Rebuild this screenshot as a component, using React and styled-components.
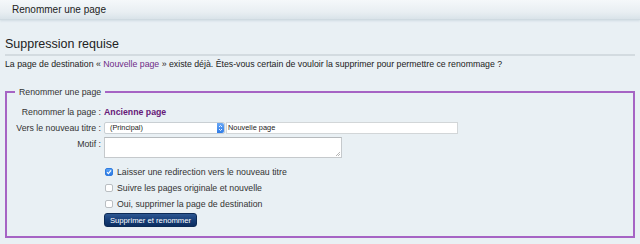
import styled, { createGlobalStyle } from "styled-components";

const GlobalStyle = createGlobalStyle`
    html, body {
        margin: 0;
        padding: 0;
        background: #e9f0f4;
        font-family: "Liberation Sans", Arial, sans-serif;
        color: #222;
    }
`;

const Page = styled.div`
    width: 640px;
    height: 244px;
    overflow: hidden;
`;

const TopBar = styled.div`
    height: 19px;
    padding-left: 12px;
    display: flex;
    align-items: center;
    font-size: 10px;
    color: #222;
    background: linear-gradient(to bottom, #f5f8fa 0%, #e8eef2 65%, #d9e3e9 100%);
    border-bottom: 1px solid #cfdae1;
    box-shadow: 0 1px 2px rgba(160, 180, 195, 0.35);
`;

const Body = styled.div`
    padding: 16px 5px 0 5px;
`;

const Heading = styled.h1`
    margin: 0;
    font-size: 12.5px;
    font-weight: normal;
    line-height: 16px;
    padding-bottom: 2px;
    border-bottom: 2px solid #d3dbe0;
`;

const Intro = styled.p`
    margin: 2px 0 0 0;
    font-size: 8.75px;
    line-height: 12px;
`;

const PageLink = styled.span`
    color: ${props => (props.strong ? "#661a78" : "#6e2a86")};
    font-weight: ${props => (props.strong ? "bold" : "normal")};
`;

const Fieldset = styled.fieldset`
    margin: 16px 0 0 0;
    padding: 7px 0 9px 0;
    border: 2px solid #a664c4;
    min-width: 0;
`;

const Legend = styled.legend`
    font-size: 8.75px;
    line-height: 12px;
    padding: 0 4px;
    margin-left: 8px;
    color: #333;
`;

const FormGrid = styled.div`
    display: grid;
    grid-template-columns: 94px 1fr;
    column-gap: 3px;
    row-gap: 3px;
    font-size: 8.75px;
    align-items: center;
`;

const Label = styled.div`
    text-align: right;
    color: #333;
    line-height: 12px;
    align-self: ${props => (props.top ? "start" : "center")};
    padding-top: ${props => (props.top ? "1px" : "0")};
`;

const Field = styled.div`
    display: flex;
    align-items: center;
    min-height: 13px;
`;

const SelectBox = styled.div`
    width: 114px;
    height: 10px;
    display: flex;
    align-items: center;
    justify-content: space-between;
    background: #fff;
    border: 1px solid #c9cfd3;
    border-radius: 2px;
    font-size: 7.3px;
    padding-left: 5px;
    color: #222;
`;

const SelectArrow = styled.div`
    width: 7px;
    height: 10px;
    border-radius: 0 2px 2px 0;
    background: linear-gradient(to bottom, #6aa8f5, #2f7ce8);
    display: flex;
    align-items: center;
    justify-content: center;
`;

const TextInput = styled.div`
    width: 229px;
    height: 10px;
    margin-left: 1px;
    background: #fff;
    border: 1px solid #d2d6d8;
    font-size: 7.4px;
    line-height: 10px;
    padding-left: 1px;
    color: #222;
`;

const TextArea = styled.div`
    position: relative;
    width: 236px;
    height: 19px;
    background: #fff;
    border: 1px solid #c5c9cc;
    border-top-color: #b6babd;
`;

const Grip = styled.svg`
    position: absolute;
    right: 1px;
    bottom: 1px;
`;

const Options = styled.div`
    padding-left: 98px;
    margin-top: 8px;
    display: flex;
    flex-direction: column;
    gap: 4px;
`;

const Option = styled.label`
    display: flex;
    align-items: center;
    height: 12px;
    font-size: 8.75px;
    color: #333;
`;

const Box = styled.span`
    width: 6px;
    height: 6px;
    margin-right: 4px;
    border-radius: 2px;
    display: flex;
    align-items: center;
    justify-content: center;
    border: 1px solid ${props => (props.checked ? "#2f7be0" : "#b9bec2")};
    background: ${props => (props.checked ? "linear-gradient(#5aa2f4, #2b78e4)" : "#fff")};
`;

const SubmitButton = styled.button`
    margin-top: 3px;
    margin-left: 97px;
    width: 93px;
    height: 14px;
    padding: 0;
    font-family: "Liberation Sans", Arial, sans-serif;
    font-size: 7.7px;
    color: #fff;
    border: 1px solid #0c2a55;
    border-radius: 3px;
    background: linear-gradient(to bottom, #2d5791 0%, #163e78 50%, #0b2d60 100%);
    display: block;
`;

const Check = () => (
    <svg width="6" height="6" viewBox="0 0 6 6">
        <path d="M1 3.2 L2.4 4.6 L5 1.4" stroke="#fff" strokeWidth="1.2" fill="none" />
    </svg>
);

const options = [
    { text: "Laisser une redirection vers le nouveau titre", checked: true },
    { text: "Suivre les pages originale et nouvelle", checked: false },
    { text: "Oui, supprimer la page de destination", checked: false }
];

const App = () => (
    <>
        <GlobalStyle />
        <Page>
            <TopBar>Renommer une page</TopBar>
            <Body>
                <Heading>Suppression requise</Heading>
                <Intro>
                    La page de destination « <PageLink>Nouvelle page</PageLink> » existe déjà. Êtes-vous certain de vouloir la supprimer pour permettre ce renommage ?
                </Intro>
                <Fieldset>
                    <Legend>Renommer une page</Legend>
                    <FormGrid>
                        <Label>Renommer la page :</Label>
                        <Field><PageLink strong>Ancienne page</PageLink></Field>
                        <Label>Vers le nouveau titre :</Label>
                        <Field>
                            <SelectBox>
                                (Principal)
                                <SelectArrow>
                                    <svg width="5" height="8" viewBox="0 0 5 8">
                                        <path d="M1 3 L2.5 1.5 L4 3 M1 5 L2.5 6.5 L4 5" stroke="#fff" strokeWidth="0.9" fill="none" />
                                    </svg>
                                </SelectArrow>
                            </SelectBox>
                            <TextInput>Nouvelle page</TextInput>
                        </Field>
                        <Label top>Motif :</Label>
                        <Field>
                            <TextArea>
                                <Grip width="5" height="5" viewBox="0 0 5 5">
                                    <path d="M1 5 L5 1 M3 5 L5 3" stroke="#999" strokeWidth="0.7" />
                                </Grip>
                            </TextArea>
                        </Field>
                    </FormGrid>
                    <Options>
                        {options.map(option => (
                            <Option key={option.text}>
                                <Box checked={option.checked}>{option.checked && <Check />}</Box>
                                {option.text}
                            </Option>
                        ))}
                    </Options>
                    <SubmitButton>Supprimer et renommer</SubmitButton>
                </Fieldset>
            </Body>
        </Page>
    </>
);

export default App;
